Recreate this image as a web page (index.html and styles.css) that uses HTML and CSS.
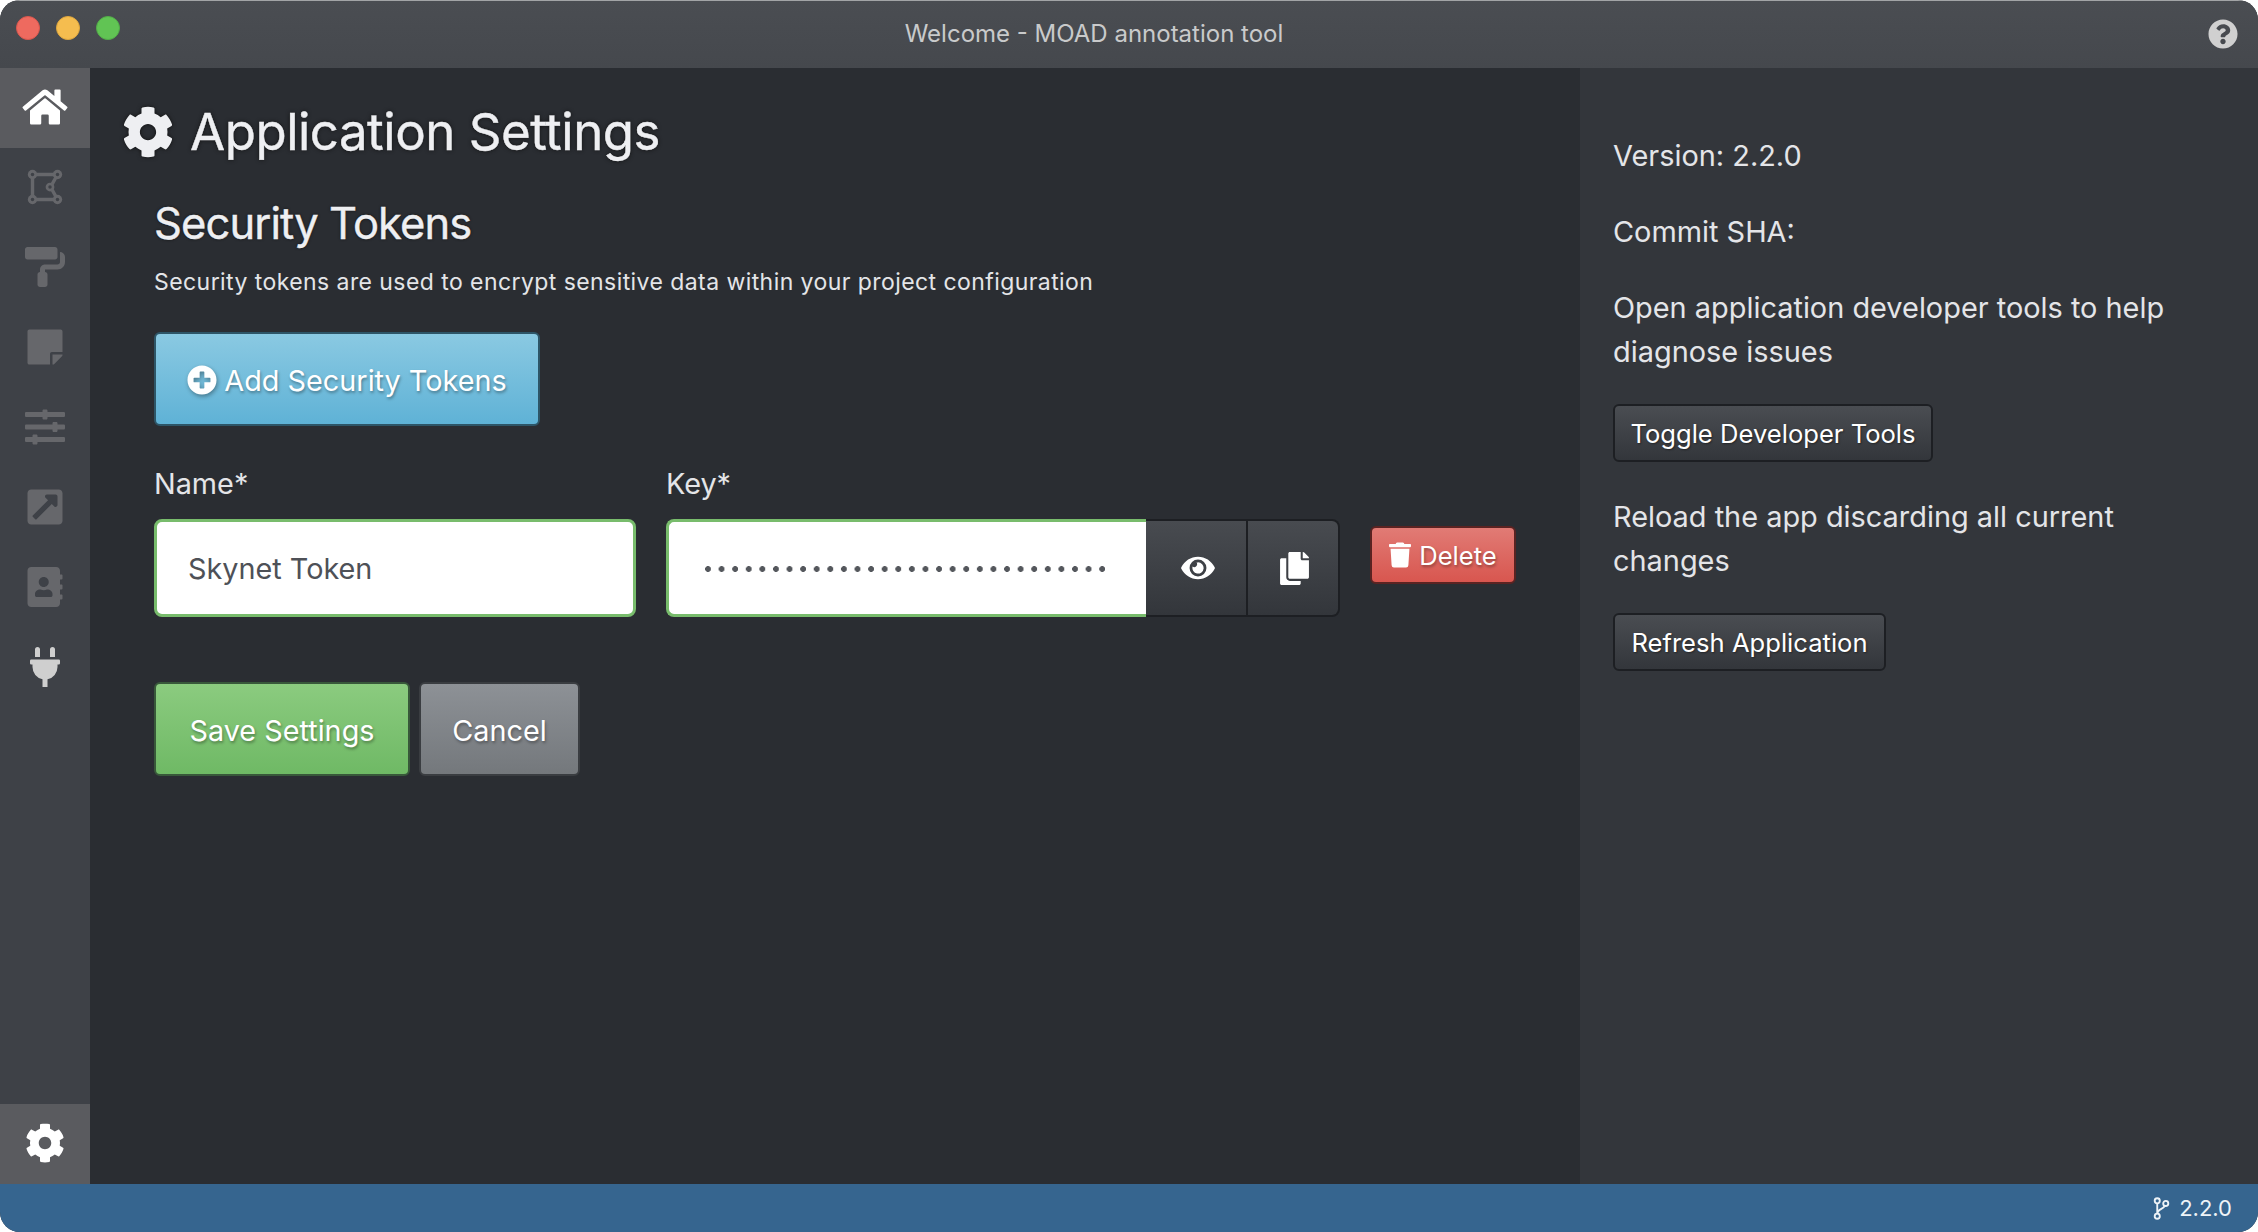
FILE: index.html
```html
<!DOCTYPE html>
<html lang="en">
<head>
<meta charset="utf-8">
<title>Welcome - MOAD annotation tool</title>
<link rel="stylesheet" href="styles.css">
</head>
<body>
<div class="app">
  <header class="titlebar">
    <div class="lights"><span class="light red"></span><span class="light yellow"></span><span class="light green"></span></div>
    <div class="title">Welcome - MOAD annotation tool</div>
    <svg class="help" viewBox="0 0 512 512"><path d="M504 256c0 136.997-111.043 248-248 248S8 392.997 8 256C8 119.083 119.043 8 256 8s248 111.083 248 248zM262.655 90c-54.497 0-89.255 22.957-116.549 63.758-3.536 5.286-2.353 12.415 2.715 16.258l34.699 26.31c5.205 3.947 12.621 3.008 16.665-2.122 17.864-22.658 30.113-35.797 57.303-35.797 20.429 0 45.698 13.148 45.698 32.958 0 14.976-12.363 22.667-32.534 33.976C247.128 238.528 216 254.941 216 296v4c0 6.627 5.373 12 12 12h56c6.627 0 12-5.373 12-12v-1.333c0-28.462 83.186-29.647 83.186-106.667 0-58.002-60.165-102-116.531-102zM256 338c-25.365 0-46 20.635-46 46 0 25.364 20.635 46 46 46s46-20.636 46-46c0-25.365-20.635-46-46-46z"/></svg>
  </header>
  <div class="body">
    <nav class="sidebar">
      <a class="nav-item active"><svg class="nav-home" viewBox="0 0 576 512"><path d="M280.37 148.26L96 300.11V464a16 16 0 0 0 16 16l112.06-.29a16 16 0 0 0 15.92-16V368a16 16 0 0 1 16-16h64a16 16 0 0 1 16 16v95.64a16 16 0 0 0 16 16.05L464 480a16 16 0 0 0 16-16V300L295.67 148.26a12.19 12.19 0 0 0-15.3 0zM571.6 251.47L488 182.56V44.05a12 12 0 0 0-12-12h-56a12 12 0 0 0-12 12v72.61L318.47 43a48 48 0 0 0-61 0L4.34 251.47a12 12 0 0 0-1.6 16.9l25.5 31A12 12 0 0 0 45.15 301l235.22-193.74a12.19 12.19 0 0 1 15.3 0L530.9 301a12 12 0 0 0 16.9-1.6l25.5-31a12 12 0 0 0-1.7-16.93z"/></svg></a>
      <a class="nav-item"><svg class="nav-icon" viewBox="0 0 448 512"><path class="poly" d="M64 96H384L296 256L384 416H64Z"/><circle class="dot" cx="64" cy="96" r="60"/><circle class="dot" cx="384" cy="96" r="60"/><circle class="dot" cx="64" cy="416" r="60"/><circle class="dot" cx="384" cy="416" r="60"/><circle class="dot" cx="288" cy="256" r="56"/><circle class="hole" cx="64" cy="96" r="22"/><circle class="hole" cx="384" cy="96" r="22"/><circle class="hole" cx="64" cy="416" r="22"/><circle class="hole" cx="384" cy="416" r="22"/><circle class="hole" cx="288" cy="256" r="22"/></svg></a>
      <a class="nav-item"><svg class="nav-icon" viewBox="0 0 512 512"><path d="M416 128V32c0-17.67-14.33-32-32-32H32C14.33 0 0 14.33 0 32v96c0 17.67 14.33 32 32 32h352c17.67 0 32-14.33 32-32zm32-64v128c0 17.67-14.33 32-32 32H256c-35.35 0-64 28.65-64 64v32c-17.67 0-32 14.33-32 32v128c0 17.67 14.33 32 32 32h64c17.67 0 32-14.33 32-32V352c0-17.67-14.33-32-32-32v-32h160c53.02 0 96-42.98 96-96v-64c0-35.35-28.65-64-64-64z"/></svg></a>
      <a class="nav-item"><svg class="nav-icon" viewBox="0 0 448 512"><path d="M312 320h136V56c0-13.3-10.7-24-24-24H24C10.7 32 0 42.7 0 56v400c0 13.3 10.7 24 24 24h264V344c0-13.2 10.8-24 24-24zm129 55l-98 98c-4.5 4.5-10.6 7-17 7h-6V352h128v6.1c0 6.3-2.5 12.4-7 16.9z"/></svg></a>
      <a class="nav-item"><svg class="nav-icon" viewBox="0 0 512 512"><path d="M496 384H160v-16c0-8.8-7.2-16-16-16h-32c-8.8 0-16 7.2-16 16v16H16c-8.8 0-16 7.2-16 16v32c0 8.8 7.2 16 16 16h80v16c0 8.8 7.2 16 16 16h32c8.8 0 16-7.2 16-16v-16h336c8.8 0 16-7.2 16-16v-32c0-8.8-7.2-16-16-16zm0-160h-80v-16c0-8.8-7.2-16-16-16h-32c-8.8 0-16 7.2-16 16v16H16c-8.8 0-16 7.2-16 16v32c0 8.8 7.2 16 16 16h336v16c0 8.8 7.2 16 16 16h32c8.8 0 16-7.2 16-16v-16h80c8.8 0 16-7.2 16-16v-32c0-8.8-7.2-16-16-16zm0-160H288V48c0-8.8-7.2-16-16-16h-32c-8.8 0-16 7.2-16 16v16H16C7.2 64 0 71.2 0 80v32c0 8.8 7.2 16 16 16h208v16c0 8.8 7.2 16 16 16h32c8.8 0 16-7.2 16-16v-16h208c8.8 0 16-7.2 16-16V80c0-8.8-7.2-16-16-16z"/></svg></a>
      <a class="nav-item"><svg class="nav-icon" viewBox="0 0 448 512"><path d="M448 80v352c0 26.51-21.49 48-48 48H48c-26.51 0-48-21.49-48-48V80c0-26.51 21.49-48 48-48h352c26.51 0 48 21.49 48 48zm-88 16H248.029c-21.313 0-32.08 25.861-16.971 40.971l31.984 31.987L67.515 364.485c-4.686 4.686-4.686 12.284 0 16.971l31.029 31.029c4.687 4.686 12.285 4.686 16.971 0l195.526-195.526 31.988 31.991C357.058 263.97 384 253.368 384 231.909V120c0-13.255-10.745-24-24-24z"/></svg></a>
      <a class="nav-item"><svg class="nav-icon" viewBox="0 0 448 512"><path d="M436 160c6.6 0 12-5.4 12-12v-40c0-6.6-5.4-12-12-12h-20V48c0-26.5-21.5-48-48-48H48C21.5 0 0 21.5 0 48v416c0 26.5 21.5 48 48 48h320c26.5 0 48-21.5 48-48v-48h20c6.6 0 12-5.4 12-12v-40c0-6.6-5.4-12-12-12h-20v-64h20c6.6 0 12-5.4 12-12v-40c0-6.6-5.4-12-12-12h-20v-64h20zm-228-32c35.3 0 64 28.7 64 64s-28.7 64-64 64-64-28.7-64-64 28.7-64 64-64zm112 236.8c0 10.6-10 19.2-22.4 19.2H118.4C106 384 96 375.4 96 364.8v-19.2c0-31.8 30.1-57.6 67.2-57.6h5c12.3 5.1 25.7 8 39.8 8s27.6-2.9 39.8-8h5c37.1 0 67.2 25.8 67.2 57.6v19.2z"/></svg></a>
      <a class="nav-item plug"><svg class="nav-icon" viewBox="0 0 384 512"><path d="M320,32a32,32,0,0,0-64,0v96h64Zm48,128H16A16,16,0,0,0,0,176v32a16,16,0,0,0,16,16H32v32A160.07,160.07,0,0,0,160,412.8V512h64V412.8A160.07,160.07,0,0,0,352,256V224h16a16,16,0,0,0,16-16V176A16,16,0,0,0,368,160ZM128,32a32,32,0,0,0-64,0v96h64Z"/></svg></a>
      <a class="nav-item active settings"><svg class="nav-cog" viewBox="0 0 512 512"><path d="M487.4 315.7l-42.6-24.6c4.3-23.2 4.3-47 0-70.2l42.6-24.6c4.9-2.8 7.1-8.6 5.5-14-11.1-35.6-30-67.8-54.7-94.6-3.8-4.1-10-5.1-14.8-2.3L380.8 110c-17.9-15.4-38.5-27.3-60.8-35.1V25.8c0-5.6-3.9-10.5-9.4-11.7-36.7-8.2-74.3-7.8-109.2 0-5.5 1.2-9.4 6.1-9.4 11.7V75c-22.2 7.9-42.8 19.8-60.8 35.1L88.7 85.5c-4.9-2.8-11-1.9-14.8 2.3-24.7 26.7-43.6 58.9-54.7 94.6-1.7 5.4.6 11.2 5.5 14L67.3 221c-4.3 23.2-4.3 47 0 70.2l-42.6 24.6c-4.9 2.8-7.1 8.6-5.5 14 11.1 35.6 30 67.8 54.7 94.6 3.8 4.1 10 5.1 14.8 2.3l42.6-24.6c17.9 15.4 38.5 27.3 60.8 35.1v49.2c0 5.6 3.9 10.5 9.4 11.7 36.7 8.2 74.3 7.8 109.2 0 5.5-1.2 9.4-6.1 9.4-11.7v-49.2c22.2-7.9 42.8-19.8 60.8-35.1l42.6 24.6c4.9 2.8 11 1.9 14.8-2.3 24.7-26.7 43.6-58.9 54.7-94.6 1.5-5.5-.7-11.3-5.6-14.1zM256 336c-44.1 0-80-35.9-80-80s35.9-80 80-80 80 35.9 80 80-35.9 80-80 80z"/></svg></a>
    </nav>
    <main class="main">
      <h1 class="page-title"><svg class="title-cog" viewBox="0 0 512 512"><path d="M487.4 315.7l-42.6-24.6c4.3-23.2 4.3-47 0-70.2l42.6-24.6c4.9-2.8 7.1-8.6 5.5-14-11.1-35.6-30-67.8-54.7-94.6-3.8-4.1-10-5.1-14.8-2.3L380.8 110c-17.9-15.4-38.5-27.3-60.8-35.1V25.8c0-5.6-3.9-10.5-9.4-11.7-36.7-8.2-74.3-7.8-109.2 0-5.5 1.2-9.4 6.1-9.4 11.7V75c-22.2 7.9-42.8 19.8-60.8 35.1L88.7 85.5c-4.9-2.8-11-1.9-14.8 2.3-24.7 26.7-43.6 58.9-54.7 94.6-1.7 5.4.6 11.2 5.5 14L67.3 221c-4.3 23.2-4.3 47 0 70.2l-42.6 24.6c-4.9 2.8-7.1 8.6-5.5 14 11.1 35.6 30 67.8 54.7 94.6 3.8 4.1 10 5.1 14.8 2.3l42.6-24.6c17.9 15.4 38.5 27.3 60.8 35.1v49.2c0 5.6 3.9 10.5 9.4 11.7 36.7 8.2 74.3 7.8 109.2 0 5.5-1.2 9.4-6.1 9.4-11.7v-49.2c22.2-7.9 42.8-19.8 60.8-35.1l42.6 24.6c4.9 2.8 11 1.9 14.8-2.3 24.7-26.7 43.6-58.9 54.7-94.6 1.5-5.5-.7-11.3-5.6-14.1zM256 336c-44.1 0-80-35.9-80-80s35.9-80 80-80 80 35.9 80 80-35.9 80-80 80z"/></svg>Application Settings</h1>
      <section class="content">
        <h2 class="section-title">Security Tokens</h2>
        <p class="section-desc">Security tokens are used to encrypt sensitive data within your project configuration</p>
        <button class="btn btn-info btn-lg btn-add"><svg class="plus" viewBox="0 0 512 512"><path d="M256 8C119 8 8 119 8 256s111 248 248 248 248-111 248-248S393 8 256 8zm144 276c0 6.6-5.4 12-12 12h-92v92c0 6.6-5.4 12-12 12h-56c-6.6 0-12-5.4-12-12v-92h-92c-6.6 0-12-5.4-12-12v-56c0-6.6 5.4-12 12-12h92v-92c0-6.6 5.4-12 12-12h56c6.6 0 12 5.4 12 12v92h92c6.6 0 12 5.4 12 12v56z"/></svg>Add Security Tokens</button>
        <div class="token-row">
          <div class="field field-name">
            <label class="field-label">Name*</label>
            <div class="input">Skynet Token</div>
          </div>
          <div class="field field-key">
            <label class="field-label">Key*</label>
            <div class="input-group">
              <div class="input input-key"><div class="dots"></div></div>
              <button class="addon addon-eye"><svg class="eye" viewBox="0 0 576 512"><path d="M572.52 241.4C518.29 135.59 410.93 64 288 64S57.68 135.64 3.48 241.41a32.35 32.35 0 0 0 0 29.19C57.71 376.41 165.07 448 288 448s230.32-71.64 284.52-177.41a32.35 32.35 0 0 0 0-29.19zM288 400a144 144 0 1 1 144-144 143.93 143.93 0 0 1-144 144zm0-240a95.31 95.31 0 0 0-25.31 3.79 47.85 47.85 0 0 1-66.9 66.9A95.78 95.78 0 1 0 288 160z"/></svg></button>
              <button class="addon addon-last"><svg class="copy" viewBox="0 0 448 512"><path d="M320 448v40c0 13.255-10.745 24-24 24H24c-13.255 0-24-10.745-24-24V120c0-13.255 10.745-24 24-24h72v296c0 30.879 25.121 56 56 56h168zm0-344V0H152c-13.255 0-24 10.745-24 24v368c0 13.255 10.745 24 24 24h272c13.255 0 24-10.745 24-24V128H344c-13.2 0-24-10.8-24-24zm120.971-31.029L375.029 7.029A24 24 0 0 0 358.059 0H352v96h96v-6.059a24 24 0 0 0-7.029-16.97z"/></svg></button>
            </div>
          </div>
          <button class="btn btn-danger btn-delete"><svg class="trash" viewBox="0 0 448 512"><path d="M432 32H312l-9.4-18.7A24 24 0 0 0 281.1 0H166.8a23.72 23.72 0 0 0-21.4 13.3L136 32H16A16 16 0 0 0 0 48v32a16 16 0 0 0 16 16h416a16 16 0 0 0 16-16V48a16 16 0 0 0-16-16zM53.2 467a48 48 0 0 0 47.9 45h245.8a48 48 0 0 0 47.9-45L416 128H32z"/></svg>Delete</button>
        </div>
        <div class="actions">
          <button class="btn btn-success btn-lg btn-save">Save Settings</button>
          <button class="btn btn-secondary btn-lg btn-cancel">Cancel</button>
        </div>
      </section>
    </main>
    <aside class="panel">
      <p class="panel-text">Version: 2.2.0</p>
      <p class="panel-text">Commit SHA:</p>
      <p class="panel-text">Open application developer tools to help diagnose issues</p>
      <button class="btn btn-dark btn-toggle">Toggle Developer Tools</button>
      <p class="panel-text">Reload the app discarding all current changes</p>
      <button class="btn btn-dark btn-refresh">Refresh Application</button>
    </aside>
  </div>
  <footer class="statusbar">
    <svg class="branch" viewBox="0 0 20 27"><path class="branch-line" d="M5 5V22M5 20C5 13 15 15 15 7"/><circle class="branch-dot" cx="5" cy="4.5" r="3"/><circle class="branch-dot" cx="5" cy="22.5" r="3"/><circle class="branch-dot" cx="15" cy="7.5" r="3"/></svg>
    <span class="version">2.2.0</span>
  </footer>
</div>
</body>
</html>
```

FILE: styles.css
```css
* { box-sizing: border-box; }
html, body { margin: 0; padding: 0; height: 100%; background: #fff; }
body { font-family: Inter, "Noto Sans", sans-serif; color: #e9eaed; overflow: hidden; }
svg { fill: currentColor; display: block; flex: none; }

.app { width: 2258px; height: 1232px; border-radius: 20px; overflow: hidden; display: flex; flex-direction: column; background: #2a2d32; }

.titlebar { height: 68px; flex: none; display: flex; align-items: flex-start; background: linear-gradient(#4a4d52, #45484d); border-top: 1px solid #a2a4a6; }
.lights { display: flex; gap: 16px; padding: 15px 0 0 16px; width: 120px; }
.light { width: 24px; height: 24px; border-radius: 50%; }
.red { background: #ee6a5f; border: 1px solid #d9574e; }
.yellow { background: #f5bd4f; border: 1px solid #dda63e; }
.green { background: #61c454; border: 1px solid #52ad48; }
.title { flex: 1; text-align: center; color: #c9cacb; font-size: 24px; line-height: 66px; padding-right: 140px; }
.help { width: 30px; height: 30px; color: #d0d0d0; margin: 18px 20px 0 0; }

.body { flex: 1; display: flex; min-height: 0; }
.sidebar { width: 90px; flex: none; background: #3e4147; display: flex; flex-direction: column; color: #66676b; }
.nav-item { height: 80px; flex: none; display: flex; align-items: center; justify-content: center; padding-bottom: 2px; }
.nav-item.active { background: #5a5b5f; color: #fff; }
.nav-item.plug { color: #cfcfcf; }
.settings { margin-top: auto; }
.nav-icon { width: 40px; height: 40px; }
.nav-home { width: 46px; height: 40px; }
.nav-cog { width: 40px; height: 40px; }
.poly { fill: none; stroke: currentColor; stroke-width: 44; }
.dot { fill: currentColor; }
.hole { fill: #3e4147; }

.main { flex: 1; min-width: 0; background: #2a2d32; padding: 28px 0 0 32px; }
.page-title { margin: 0; display: flex; align-items: center; gap: 16px; font-size: 51px; letter-spacing: -0.5px; line-height: 72px; font-weight: 400; color: #eeeff2; text-shadow: 0 0 4px #111; -webkit-text-stroke: 0.4px #eeeff2; }
.title-cog { width: 52px; height: 52px; filter: drop-shadow(0 0 2px #111); }
.content { padding: 0 0 0 32px; }
.section-title { margin: 28px 0 0; font-size: 43.5px; letter-spacing: -0.9px; line-height: 54px; font-weight: 400; color: #eeeff2; text-shadow: 0 0 3px #111; -webkit-text-stroke: 0.4px #eeeff2; }
.section-desc { margin: 14px 0 0; font-size: 23px; line-height: 36px; color: #e4e5e8; letter-spacing: 0.43px; }

.btn { font: inherit; display: inline-flex; align-items: center; justify-content: center; color: #fff; border-radius: 6px; padding: 0; text-shadow: 1px 2px 3px rgba(0,0,0,.35); }
.btn-lg { font-size: 28.8px; height: 94px; padding-top: 2px; }
.btn-info { background: linear-gradient(#8ac9e2, #5fb2d6); border: 2px solid #2d5567; }
.btn-add { width: 386px; margin-top: 32px; gap: 7px; }
.plus { width: 30px; height: 30px; filter: drop-shadow(1px 2px 2px rgba(0,0,0,.35)); }

.token-row { display: flex; align-items: flex-start; margin-top: 37px; }
.field-label { display: block; font-size: 28.8px; line-height: 42px; color: #e4e5e8; height: 56px; }
.field-name { width: 482px; margin-right: 30px; }
.field-key { width: 674px; }
.input { height: 98px; background: #fff; border: 3px solid #78bc6c; border-radius: 8px; color: #4e5157; font-size: 28.8px; line-height: 94px; padding-left: 31px; }
.input-group { display: flex; height: 98px; }
.input-key { width: 480px; border-radius: 8px 0 0 8px; border-right: 0; display: flex; align-items: center; }
.dots { width: 400px; height: 6px; margin-top: 2px; background: radial-gradient(circle at 3px 3px, #54575c 2.6px, transparent 3.2px) 0 0 / 13.6px 6px repeat-x; margin-left: 5px; }
.addon { width: 102px; border: 2px solid #1d1f23; border-left: 0; background: linear-gradient(#484b50, #33363b); color: #fff; padding: 0; display: flex; align-items: center; justify-content: center; }
.addon-eye { padding-left: 4px; }
.addon-last { width: 92px; border-radius: 0 8px 8px 0; padding-left: 2px; }
.eye { width: 34px; height: 30px; }
.copy { width: 29px; height: 33px; }

.btn-danger { background: linear-gradient(#e17b75, #d8564f); border: 2px solid #5a2322; }
.btn-delete { width: 146px; height: 58px; margin: 63px 0 0 30px; font-size: 25.6px; gap: 8px; }
.trash { width: 22px; height: 26px; }

.actions { display: flex; gap: 9px; margin-top: 65px; }
.btn-success { background: linear-gradient(#8bcb7f, #6fb965); border: 2px solid #38583a; }
.btn-secondary { background: linear-gradient(#8d9196, #74787c); border: 2px solid #3a3d41; }
.btn-save { width: 256px; }
.btn-cancel { width: 161px; }

.panel { width: 678px; flex: none; background: #33363b; padding: 66px 33px 0; }
.panel-text { margin: 0 0 32px; font-size: 28.9px; line-height: 44px; color: #e4e5e8; }
.btn-dark { display: flex; height: 58px; font-size: 25.6px; background: linear-gradient(#4a4d52, #33363b); border: 2px solid #1d1f23; text-shadow: 1px 1px 2px rgba(0,0,0,.4); margin: -2px 0 33px; }
.btn-toggle { width: 320px; }
.btn-refresh { width: 273px; }

.statusbar { height: 48px; flex: none; background: #36658f; display: flex; align-items: center; justify-content: flex-end; padding-right: 26px; gap: 9px; font-size: 22px; color: #eef3f7; }
.branch { width: 17px; height: 23px; }
.branch-line { fill: none; stroke: currentColor; stroke-width: 2.2; }
.branch-dot { fill: #36658f; stroke: currentColor; stroke-width: 2.2; }
```
